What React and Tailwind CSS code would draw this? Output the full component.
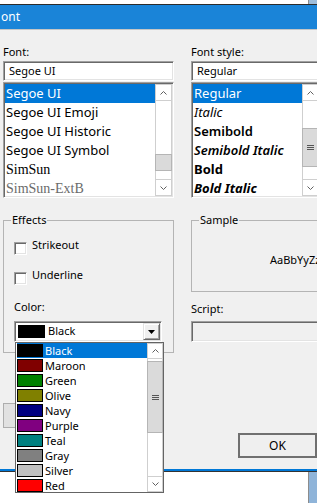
const sunken =
  "border border-t-[#a0a0a0] border-l-[#a0a0a0] border-r-white border-b-white shadow-[inset_1px_1px_0_#696969,inset_-1px_-1px_0_#e3e3e3]";

const fonts = [
  { name: "Segoe UI", cls: "" },
  { name: "Segoe UI Emoji", cls: "" },
  { name: "Segoe UI Historic", cls: "" },
  { name: "Segoe UI Symbol", cls: "" },
  { name: "SimSun", cls: "font-['Liberation_Serif',serif] text-[14px]" },
  { name: "SimSun-ExtB", cls: "font-['Liberation_Serif',serif] text-[14px] text-[#6b6b6b]" },
];

const styles = [
  { name: "Regular", cls: "" },
  { name: "Italic", cls: "italic" },
  { name: "Semibold", cls: "font-semibold" },
  { name: "Semibold Italic", cls: "font-semibold italic" },
  { name: "Bold", cls: "font-bold" },
  { name: "Bold Italic", cls: "font-bold italic" },
];

const colors = [
  { name: "Black", hex: "#000000" },
  { name: "Maroon", hex: "#800000" },
  { name: "Green", hex: "#008000" },
  { name: "Olive", hex: "#808000" },
  { name: "Navy", hex: "#000080" },
  { name: "Purple", hex: "#800080" },
  { name: "Teal", hex: "#008080" },
  { name: "Gray", hex: "#808080" },
  { name: "Silver", hex: "#c0c0c0" },
  { name: "Red", hex: "#ff0000" },
];

function Chevron({ dir }) {
  const pts = dir === "up" ? "0.5,3.5 3.5,0.5 6.5,3.5" : "0.5,0.5 3.5,3.5 6.5,0.5";
  return (
    <svg width="7" height="4" viewBox="0 0 7 4">
      <polyline points={pts} fill="none" stroke="#606060" strokeWidth="1" />
    </svg>
  );
}

function Grip() {
  return (
    <svg width="7" height="5" viewBox="0 0 7 5">
      <path d="M0 0.5H7M0 2.5H7M0 4.5H7" stroke="#555" strokeWidth="1" />
    </svg>
  );
}

function ScrollBar({ className, btnClass, thumbClass, grip }) {
  return (
    <div className={`flex shrink-0 flex-col bg-white ${className}`}>
      <div className={`flex shrink-0 items-center justify-center border border-[#cfcfcf] ${btnClass}`}>
        <Chevron dir="up" />
      </div>
      <div className="flex-1 border-x border-[#cfcfcf]">
        <div className={`-mx-[1px] flex items-center justify-center border border-[#b5b5b5] bg-[#dadada] ${thumbClass}`}>
          {grip && <Grip />}
        </div>
      </div>
      <div className={`flex shrink-0 items-center justify-center border border-[#cfcfcf] ${btnClass}`}>
        <Chevron dir="down" />
      </div>
    </div>
  );
}

function ListBox({ items, thumbClass, grip }) {
  return (
    <div className={`mt-[1px] flex h-[116px] bg-white p-[1px] ${sunken}`}>
      <div className="flex-1 overflow-hidden">
        {items.map((it, i) => (
          <div
            key={it.name}
            className={`h-[19px] whitespace-nowrap pl-[1px] text-[13px] leading-[19px] ${
              i === 0 ? "bg-[#0078d7] text-white" : ""
            } ${it.cls}`}
          >
            {it.name}
          </div>
        ))}
      </div>
      <ScrollBar className="w-[17px]" btnClass="h-[17px]" thumbClass={thumbClass} grip={grip} />
    </div>
  );
}

function CheckRow({ label, className }) {
  return (
    <div className={`ml-[3px] flex h-[16px] items-start leading-[16px] ${className}`}>
      <div className={`mt-[5px] h-[13px] w-[13px] shrink-0 bg-white ${sunken}`} />
      <span className="ml-[5px]">{label}</span>
    </div>
  );
}

function ColorDropdown() {
  return (
    <div className="absolute left-0 top-full z-10 mt-[1px] flex h-[151px] w-[149px] overflow-hidden border border-[#646464] bg-white pl-[1px]">
      <div className="w-[130px] shrink-0">
        {colors.map((c, i) => (
          <div
            key={c.name}
            className={`flex h-[15px] items-center leading-[15px] ${i === 0 ? "bg-[#0078d7] text-white" : ""}`}
          >
            <div className="h-[13px] w-[26px] shrink-0 border border-black" style={{ backgroundColor: c.hex }} />
            <span className="ml-[2px]">{c.name}</span>
          </div>
        ))}
      </div>
      <ScrollBar className="w-[16px]" btnClass="h-[16px]" thumbClass="mt-[2px] h-[72px]" grip />
    </div>
  );
}

export default function App() {
  return (
    <div className="relative h-[503px] w-[317px] overflow-hidden bg-white font-['Noto_Sans',sans-serif] text-[11px] text-black">
      {/* edge of the window behind */}
      <div className="flex h-[4px]">
        <div className="flex-1 bg-white" />
        <div className="w-[9px] border-l border-[#8c8c8c] bg-[#9dbddc]" />
      </div>
      <div className="h-[1px] bg-[#2b2b2b]" />
      <div className="flex h-[24px] items-center bg-[#1a84d8] pl-[1px] text-[12px] text-white">ont</div>

      <div className="relative h-[440px] border-t border-[#c6c6c6] bg-[#f0f0f0] pl-[3px] pt-[14px]">
        <div className="flex gap-[17px]">
          <div className="w-[171px] shrink-0">
            <div className="h-[16px] leading-[16px]">Font:</div>
            <div className={`mt-[1px] h-[20px] bg-white pl-[5px] leading-[18px] ${sunken}`}>Segoe UI</div>
            <ListBox items={fonts} thumbClass="mt-[53px] h-[17px]" />
          </div>
          <div className="w-[130px] shrink-0">
            <div className="h-[16px] leading-[16px]">Font style:</div>
            <div className={`mt-[1px] h-[20px] bg-white pl-[5px] leading-[18px] ${sunken}`}>Regular</div>
            <ListBox items={styles} thumbClass="mt-[27px] h-[39px]" grip />
          </div>
        </div>

        <div className="mt-[14px] flex items-start gap-[17px]">
          <fieldset className="h-[141px] w-[171px] shrink-0 border border-[#b4b4b4] pl-[7px]">
            <legend className="px-[1px] leading-[16px]">Effects</legend>
            <CheckRow label="Strikeout" className="mt-[9px]" />
            <CheckRow label="Underline" className="mt-[14px]" />
            <div className="ml-[3px] mt-[16px] h-[16px] leading-[16px]">Color:</div>
            <div className={`relative ml-[3px] mt-[6px] flex h-[21px] w-[148px] items-center bg-white ${sunken}`}>
              <div className="ml-[3px] h-[13px] w-[27px] shrink-0 bg-black" />
              <span className="ml-[3px]">Black</span>
              <div className="ml-auto mr-[1px] flex h-[17px] w-[17px] items-center justify-center border border-t-[#e3e3e3] border-l-[#e3e3e3] border-r-[#696969] border-b-[#696969] bg-[#f0f0f0] shadow-[inset_1px_1px_0_#fff,inset_-1px_-1px_0_#a0a0a0]">
                <svg width="7" height="4" viewBox="0 0 7 4">
                  <polygon points="0,0 7,0 3.5,4" fill="#000" />
                </svg>
              </div>
              <ColorDropdown />
            </div>
          </fieldset>

          <div className="w-[130px] shrink-0">
            <fieldset className="h-[80px] w-[210px] border border-[#b4b4b4] pl-[7px]">
              <legend className="px-[1px] leading-[16px]">Sample</legend>
              <div className="mt-[24px] whitespace-nowrap pl-[71px] leading-[16px]">AaBbYyZz</div>
            </fieldset>
            <div className="mt-[9px] h-[16px] leading-[16px]">Script:</div>
            <div className={`mt-[4px] h-[21px] w-[210px] bg-[#f0f0f0] ${sunken}`} />
          </div>
        </div>

        <div className="mt-[50px] flex items-start">
          <div className="h-[25px] w-[80px] border border-[#adadad] bg-[#e1e1e1]" />
          <div className="ml-auto mt-[30px] flex h-[25px] w-[79px] items-center justify-center border-2 border-[#707070] bg-[#efefef] text-[12px]">
            OK
          </div>
        </div>
      </div>

      <div className="h-[2px] bg-[#0078d7]" />
      <div className="h-[1px] bg-[#333]" />
      <div className="flex h-[31px]">
        <div className="flex-1 bg-white" />
        <div className="w-[9px] border-l border-[#8c8c8c] bg-[#8fb4d9]" />
      </div>
    </div>
  );
}
